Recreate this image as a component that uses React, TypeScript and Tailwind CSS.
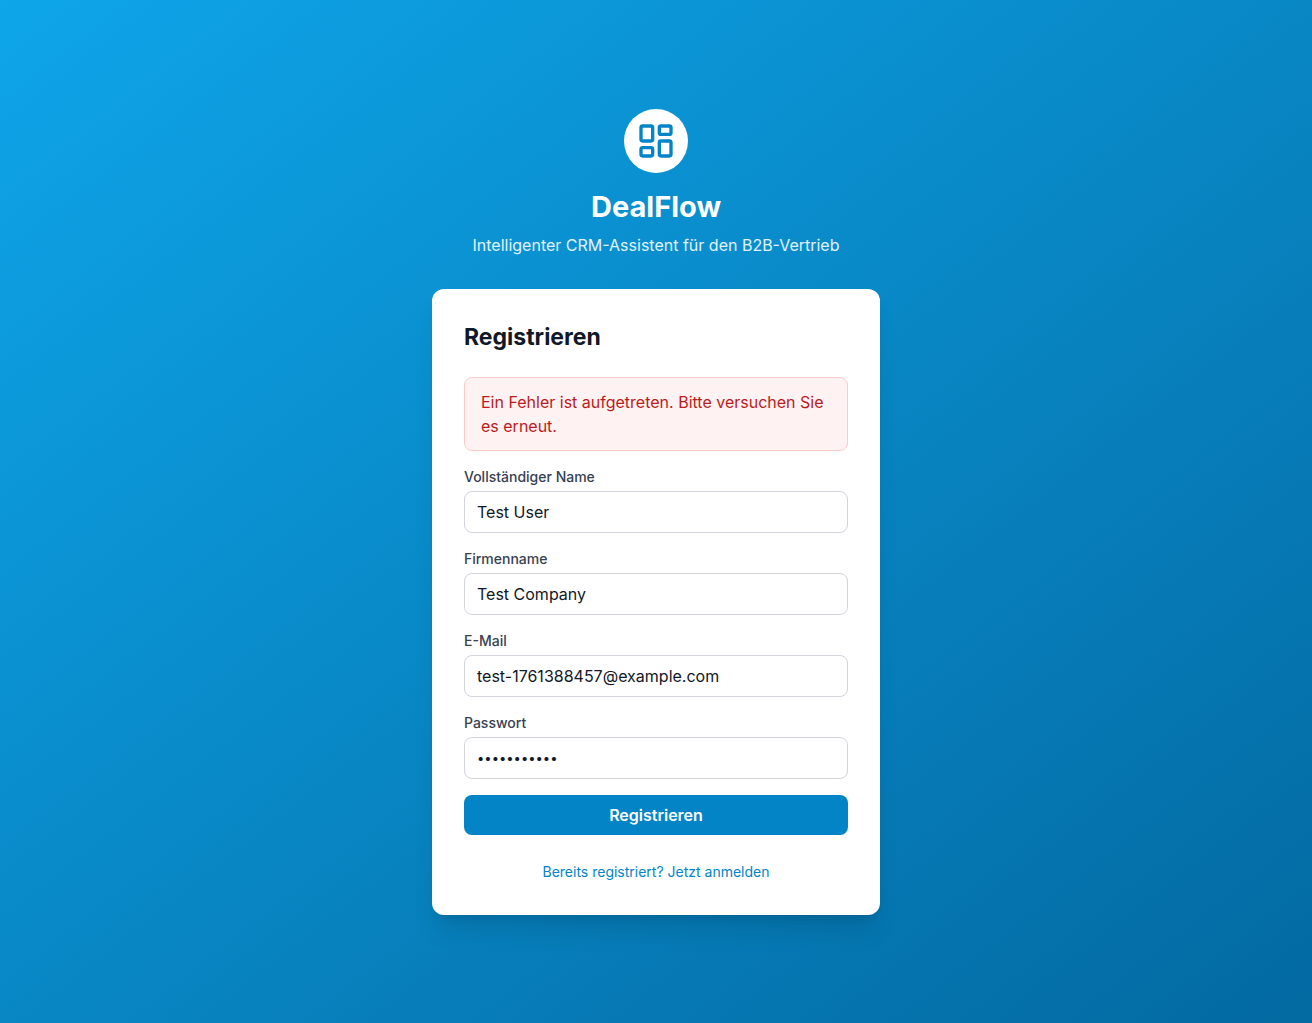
import { useState } from "react";
import { LayoutDashboard } from "lucide-react";

const fields = [
  { id: "name", label: "Vollständiger Name", type: "text", value: "Test User" },
  { id: "company", label: "Firmenname", type: "text", value: "Test Company" },
  { id: "email", label: "E-Mail", type: "email", value: "test-1761388457@example.com" },
  { id: "password", label: "Passwort", type: "password", value: "Password123" },
];

function Field({ id, label, type, value }: (typeof fields)[number]) {
  const [current, setCurrent] = useState(value);
  const size = type === "password" ? "text-[13px]" : "text-[16px]";
  return (
    <div>
      <label htmlFor={id} className="mb-1 block text-sm font-medium text-[#374151]">
        {label}
      </label>
      <input
        id={id}
        type={type}
        value={current}
        onChange={(e) => setCurrent(e.target.value)}
        className={`block w-full rounded-lg border border-[#d1d5db] bg-white px-3 py-2 leading-6 text-[#111827] ${size}`}
      />
    </div>
  );
}

export default function App() {
  return (
    <main className="flex min-h-screen items-center justify-center bg-[linear-gradient(to_bottom_right,#0ea5e9,#0369a1)] p-4 font-['Inter',sans-serif]">
      <div className="w-full max-w-md">
        <header className="mb-8 text-center">
          <div className="mb-4 inline-flex size-16 items-center justify-center rounded-full bg-white align-top">
            <LayoutDashboard className="size-10 text-[#0284c7]" />
          </div>
          <h1 className="mb-2 text-[29px] leading-9 font-bold text-white">DealFlow</h1>
          <p className="text-base text-[#e0f2fe]">Intelligenter CRM-Assistent für den B2B-Vertrieb</p>
        </header>
        <section className="rounded-xl bg-white p-8 shadow-xl">
          <h2 className="mb-6 text-[23px] leading-8 font-bold text-[#111827]">Registrieren</h2>
          <div
            role="alert"
            className="mb-4 rounded-lg border border-[#fecaca] bg-[#fef2f2] px-4 py-3 text-base text-[#b91c1c]"
          >
            Ein Fehler ist aufgetreten. Bitte versuchen Sie es erneut.
          </div>
          <form className="space-y-4" onSubmit={(e) => e.preventDefault()}>
            {fields.map((field) => (
              <Field key={field.id} {...field} />
            ))}
            <button
              type="submit"
              className="w-full rounded-lg bg-[#0284c7] px-4 py-2 text-base font-semibold text-white"
            >
              Registrieren
            </button>
          </form>
          <div className="mt-6 text-center">
            <a href="#anmelden" className="text-sm text-[#0284c7]">
              Bereits registriert? Jetzt anmelden
            </a>
          </div>
        </section>
      </div>
    </main>
  );
}
